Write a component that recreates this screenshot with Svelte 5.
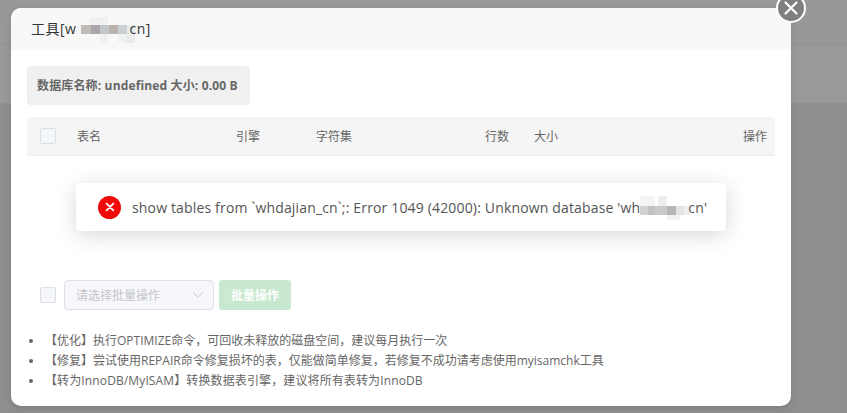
<script>
  const columns = [
    { label: '表名', width: 159 },
    { label: '引擎', width: 80 },
    { label: '字符集', width: 169 },
    { label: '行数', width: 49 },
    { label: '大小', width: 209 }
  ];

  const batchTips = [
    '【优化】执行OPTIMIZE命令，可回收未释放的磁盘空间，建议每月执行一次',
    '【修复】尝试使用REPAIR命令修复损坏的表，仅能做简单修复，若修复不成功请考虑使用myisamchk工具',
    '【转为InnoDB/MyISAM】转换数据表引擎，建议将所有表转为InnoDB'
  ];
</script>

<div class="page">
  <div class="page-top"></div>
  <div class="page-mid"></div>
</div>

<div class="modal">
  <button class="close" aria-label="关闭">
    <svg viewBox="0 0 16 16" width="16" height="16">
      <path d="M2.5 2.5 L13.5 13.5 M13.5 2.5 L2.5 13.5" stroke="#fff" stroke-width="2.2" stroke-linecap="round" fill="none" />
    </svg>
  </button>

  <div class="modal-head">
    工具[w<span class="mosaic title-mosaic"></span>cn]
  </div>

  <div class="modal-body">
    <div class="db-info">数据库名称: undefined 大小: 0.00 B</div>

    <div class="table-head">
      <span class="check"></span>
      {#each columns as col}
        <span class="th" style="width: {col.width}px">{col.label}</span>
      {/each}
      <span class="th action">操作</span>
    </div>

    <div class="table-empty"></div>

    <div class="batch">
      <span class="check"></span>
      <div class="select">
        <span>请选择批量操作</span>
        <svg viewBox="0 0 12 8" width="12" height="8">
          <path d="M1 1.2 L6 6.2 L11 1.2" stroke="#c8c9cc" stroke-width="1" fill="none" />
        </svg>
      </div>
      <button class="batch-btn">批量操作</button>
    </div>

    <ul class="tips">
      {#each batchTips as tip}
        <li>{tip}</li>
      {/each}
    </ul>
  </div>
</div>

<div class="toast">
  <span class="toast-icon">
    <svg viewBox="0 0 12 12" width="10" height="10">
      <path d="M2 2 L10 10 M10 2 L2 10" stroke="#fff" stroke-width="2.2" stroke-linecap="round" fill="none" />
    </svg>
  </span>
  <span class="toast-text">show tables from `whdajian_cn`;: Error 1049 (42000): Unknown database 'wh<span class="mosaic toast-mosaic"></span>cn'</span>
</div>

<style>
  :global(body) {
    margin: 0;
    background: #8e8e8e;
    overflow: hidden;
    font-family: "Open Sans", "Noto Sans CJK SC", sans-serif;
  }

  .page {
    height: 413px;
    background: #8e8e8e;
  }

  .page-top {
    height: 45px;
    background: #989898;
    border-bottom: 1px solid #909090;
    box-sizing: border-box;
  }

  .page-mid {
    height: 59px;
    background: #999;
    border-bottom: 1px solid #929292;
    box-sizing: border-box;
  }

  .modal {
    position: absolute;
    left: 11px;
    top: 8px;
    width: 780px;
    height: 398px;
    background: #fff;
    border-radius: 10px;
    box-shadow: 0 2px 6px rgba(0, 0, 0, 0.12);
  }

  .close {
    position: absolute;
    right: -15px;
    top: -15px;
    width: 30px;
    height: 30px;
    padding: 0;
    border: 2px solid #fff;
    border-radius: 50%;
    background: #7f7f7f;
    display: flex;
    align-items: center;
    justify-content: center;
    box-sizing: border-box;
    z-index: 2;
  }

  .modal-head {
    height: 42px;
    line-height: 42px;
    padding-left: 20px;
    background: #f8f8f8;
    border-radius: 10px 10px 0 0;
    color: #333;
    font-size: 14px;
    letter-spacing: 0.5px;
  }

  .mosaic {
    display: inline-block;
    background-repeat: no-repeat;
  }

  /* blurred-out domain in the title, x 75-134 / y 17-43 */
  .title-mosaic {
    width: 59px;
    height: 26px;
    margin: 0 -6px 0 0;
    vertical-align: -9px;
    background-image:
      linear-gradient(90deg, #f4f4f4 0 5px, #c2bab8 5px 15px, #a8a6ac 15px 24px, #c3c7ca 24px 33px, #bcb2ae 33px 42px, #c8d0d6 42px 51px, #e6eaea 51px 59px),
      linear-gradient(90deg, #f1f1f3 0 11px, #eff1f1 11px 19px),
      linear-gradient(#eff1f1, #eff1f1),
      linear-gradient(90deg, #f2f2f2 0 8px, #eaecec 8px 17px);
    background-size: 59px 9px, 19px 8px, 8px 26px, 17px 9px;
    background-position: 0 8px, 13px 0, 24px 0, 42px 17px;
  }

  .modal-body {
    padding: 16px;
  }

  .db-info {
    display: inline-block;
    height: 39px;
    line-height: 39px;
    padding: 0 12px 0 10px;
    background: #f0f0f0;
    border-radius: 4px;
    color: #666;
    font-size: 12px;
    font-weight: 700;
    letter-spacing: 0.15px;
    vertical-align: top;
  }

  .table-head {
    display: flex;
    align-items: center;
    width: 748px;
    height: 39px;
    margin-top: 12px;
    padding-left: 13px;
    box-sizing: border-box;
    background: #f5f5f5;
    border-bottom: 1px solid #ebeef5;
    border-radius: 4px 4px 0 0;
    color: #666;
    font-size: 12px;
  }

  .check {
    flex: none;
    width: 16px;
    height: 16px;
    box-sizing: border-box;
    background: #f5f6fa;
    border: 1px solid #dcdfe6;
    border-radius: 2px;
  }

  .table-head .check {
    margin-right: 21px;
  }

  .th {
    flex: none;
  }

  .th.action {
    margin-left: auto;
    margin-right: 8px;
  }

  .table-empty {
    height: 124px;
  }

  .batch {
    display: flex;
    align-items: center;
    height: 30px;
    padding-left: 13px;
  }

  .select {
    display: flex;
    align-items: center;
    justify-content: space-between;
    width: 150px;
    height: 30px;
    margin-left: 8px;
    padding: 0 9px 0 11px;
    box-sizing: border-box;
    background: #f7f7fb;
    border: 1px solid #dfe1e8;
    border-radius: 4px;
    color: #c4c6cc;
    font-size: 12px;
  }

  .batch-btn {
    width: 72px;
    height: 30px;
    margin-left: 5px;
    padding: 0;
    border: none;
    border-radius: 3px;
    background: #c8e8cf;
    color: #fff;
    font-family: inherit;
    font-size: 12px;
    font-weight: 700;
  }

  .tips {
    margin: 21px 0 0;
    padding: 0 0 0 2px;
    list-style: none;
    color: #666;
    font-size: 12px;
    line-height: 20px;
  }

  .tips li {
    display: flex;
    align-items: center;
  }

  .tips li::before {
    content: "";
    flex: none;
    width: 4px;
    height: 4px;
    margin-right: 12px;
    border-radius: 50%;
    background: #666;
  }

  .tips li:last-child {
    letter-spacing: 0.12px;
  }

  .toast {
    position: absolute;
    left: 76px;
    top: 183px;
    width: 650px;
    height: 48px;
    display: flex;
    align-items: center;
    padding-left: 22px;
    box-sizing: border-box;
    background: #fff;
    border-radius: 4px;
    box-shadow: 0 4px 22px rgba(0, 0, 0, 0.16);
    z-index: 3;
  }

  .toast-icon {
    flex: none;
    display: flex;
    align-items: center;
    justify-content: center;
    width: 23px;
    height: 23px;
    margin-right: 11px;
    border-radius: 50%;
    background: #f00a0a;
  }

  .toast-text {
    color: #555;
    font-size: 14px;
    letter-spacing: 0.16px;
    white-space: nowrap;
  }

  /* same blur over the database name, x 640-690 / y 195-219 */
  .toast-mosaic {
    width: 50px;
    height: 24px;
    margin: -10px -2px -10px 0;
    vertical-align: 3px;
    background-image:
      linear-gradient(90deg, #d2d2d2 0 8px, #c2c2c2 8px 15px, #cacaca 15px 27px, #b6b6b6 27px 36px, #e4e4e4 36px 44px, #eeeeee 44px 50px),
      linear-gradient(90deg, #f4f4f4 0 15px, #fff 15px 18px, #eeeeee 18px 27px),
      linear-gradient(#f2f2f2, #f2f2f2);
    background-size: 50px 9px, 27px 10px, 13px 5px;
    background-position: 0 10px, 0 0, 27px 19px;
  }
</style>
